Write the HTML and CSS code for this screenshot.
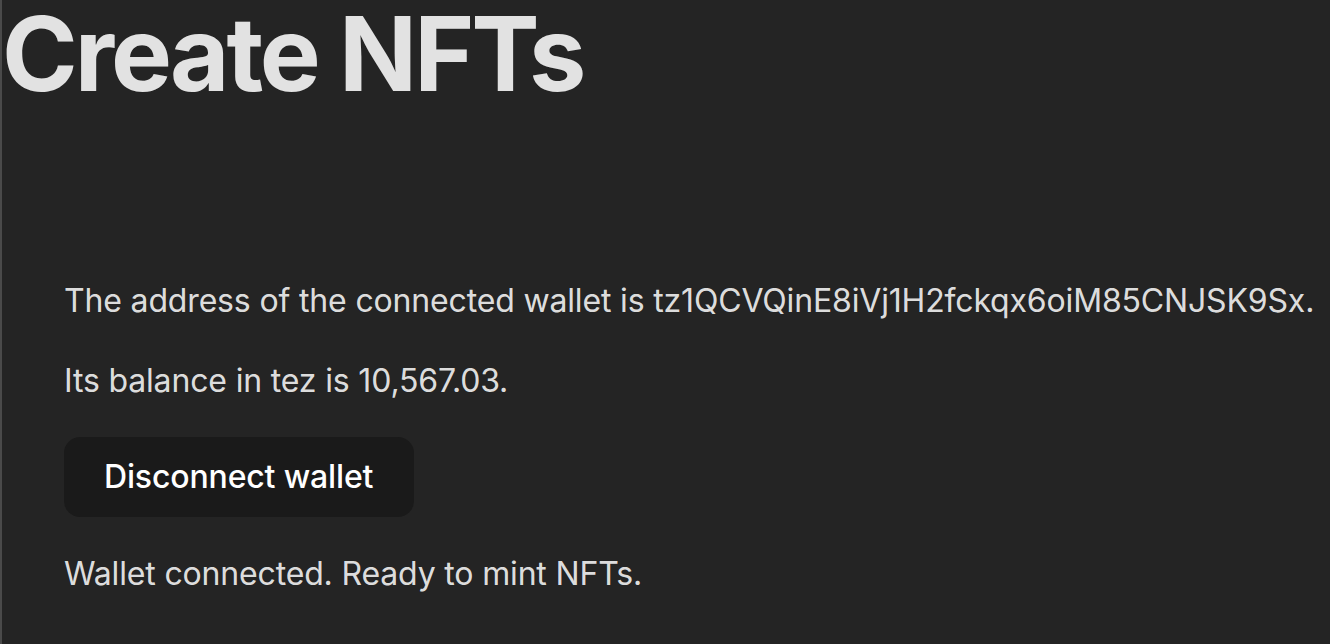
FILE: index.html
```html
<!DOCTYPE html>
<html lang="en">
<head>
<meta charset="utf-8">
<title>Create NFTs</title>
<link rel="stylesheet" href="styles.css">
</head>
<body>
<div class="page">
  <h1 class="title">Create NFTs</h1>
  <div class="wallet">
    <p class="line">The address of the connected wallet is tz1QCVQinE8iVj1H2fckqx6oiM85CNJSK9Sx.</p>
    <p class="line">Its balance in tez is 10,567.03.</p>
    <button class="btn" type="button">Disconnect wallet</button>
    <p class="line">Wallet connected. Ready to mint NFTs.</p>
  </div>
</div>
</body>
</html>
```

FILE: styles.css
```css
html, body {
  margin: 0;
  padding: 0;
  height: 100%;
}
body {
  background: #242424;
  color: rgba(255, 255, 255, 0.87);
  font-family: Inter, "Noto Sans", sans-serif;
  font-size: 32px;
  line-height: 1.5;
  letter-spacing: -0.16px;
  overflow: hidden;
}
.page {
  min-height: 100%;
  border-left: 2px solid #4a4a4a;
  box-sizing: border-box;
}
.title {
  margin: 0;
  font-size: 102.4px;
  line-height: 1.06;
  font-weight: 700;
  letter-spacing: -3px;
}
.wallet {
  padding: 168px 0 0 62px;
}
.line {
  margin: 0 0 32px 0;
}
.btn {
  display: block;
  margin: 0 0 33px 0;
  font-family: inherit;
  font-size: 32px;
  line-height: 1.5;
  font-weight: 500;
  letter-spacing: -0.15px;
  color: #ffffff;
  background: #1a1a1a;
  border: 0;
  border-radius: 16px;
  padding: 16px 41px 16px 40px;
  cursor: pointer;
}
```
